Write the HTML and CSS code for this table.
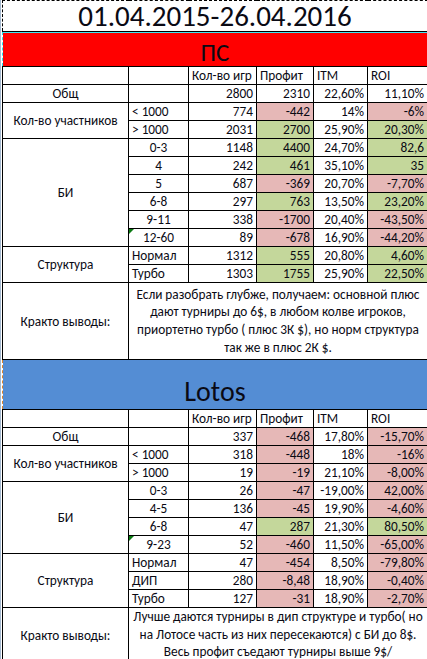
FILE: index.html
```html
<!DOCTYPE html>
<html lang="ru">
<head>
<meta charset="utf-8">
<title>Статистика</title>
<link rel="stylesheet" href="styles.css">
</head>
<body>
<div class="sheet">
<table class="grid">
<colgroup>
<col class="c1"><col class="c2"><col class="c3"><col class="c4"><col class="c5"><col class="c6">
</colgroup>
<tbody>
<tr class="title-row"><td colspan="6" class="title">01.04.2015-26.04.2016</td></tr>
<tr class="band-row red"><td colspan="6" class="band band-ps">ПС</td></tr>
<tr class="head"><td></td><td></td><td>Кол-во игр</td><td>Профит</td><td>ITM</td><td>ROI</td></tr>
<tr><td class="lbl">Общ</td><td></td><td class="n">2800</td><td class="n">2310</td><td class="n">22,60%</td><td class="n">11,10%</td></tr>
<tr><td class="lbl" rowspan="2">Кол-во участников</td><td class="l">&lt; 1000</td><td class="n">774</td><td class="n p">-442</td><td class="n">14%</td><td class="n p">-6%</td></tr>
<tr><td class="l">&gt; 1000</td><td class="n">2031</td><td class="n g">2700</td><td class="n">25,90%</td><td class="n g">20,30%</td></tr>
<tr><td class="lbl" rowspan="6">БИ</td><td class="c">0-3</td><td class="n">1148</td><td class="n g">4400</td><td class="n">24,70%</td><td class="n g">82,6</td></tr>
<tr><td class="c">4</td><td class="n">242</td><td class="n g">461</td><td class="n">35,10%</td><td class="n g">35</td></tr>
<tr><td class="c">5</td><td class="n">687</td><td class="n p">-369</td><td class="n">20,70%</td><td class="n p">-7,70%</td></tr>
<tr><td class="c">6-8</td><td class="n">297</td><td class="n g">763</td><td class="n">13,50%</td><td class="n g">23,20%</td></tr>
<tr><td class="c">9-11</td><td class="n">338</td><td class="n p">-1700</td><td class="n">20,40%</td><td class="n p">-43,50%</td></tr>
<tr><td class="c flag">12-60</td><td class="n">89</td><td class="n p">-678</td><td class="n">16,90%</td><td class="n p">-44,20%</td></tr>
<tr><td class="lbl" rowspan="2">Структура</td><td class="l">Нормал</td><td class="n">1312</td><td class="n g">555</td><td class="n">20,80%</td><td class="n g">4,60%</td></tr>
<tr><td class="l">Турбо</td><td class="n">1303</td><td class="n g">1755</td><td class="n">25,90%</td><td class="n g">22,50%</td></tr>
<tr class="note-row note-1"><td class="lbl">Кракто выводы:</td><td colspan="5" class="note">Если разобрать глубже, получаем: основной плюс<br>дают турниры до 6$, в любом колве игроков,<br>приортетно турбо ( плюс 3К $), но норм структура<br>так же в плюс 2К $.</td></tr>
<tr class="band-row blue"><td colspan="6" class="band band-lotos">Lotos</td></tr>
<tr class="head"><td></td><td></td><td>Кол-во игр</td><td>Профит</td><td>ITM</td><td>ROI</td></tr>
<tr><td class="lbl">Общ</td><td></td><td class="n">337</td><td class="n p">-468</td><td class="n">17,80%</td><td class="n p">-15,70%</td></tr>
<tr><td class="lbl" rowspan="2">Кол-во участников</td><td class="l">&lt; 1000</td><td class="n">318</td><td class="n p">-448</td><td class="n">18%</td><td class="n p">-16%</td></tr>
<tr><td class="l">&gt; 1000</td><td class="n">19</td><td class="n p">-19</td><td class="n">21,10%</td><td class="n p">-8,00%</td></tr>
<tr><td class="lbl" rowspan="4">БИ</td><td class="c">0-3</td><td class="n">26</td><td class="n p">-47</td><td class="n">-19,00%</td><td class="n p">42,00%</td></tr>
<tr><td class="c">4-5</td><td class="n">136</td><td class="n p">-45</td><td class="n">19,90%</td><td class="n p">-4,60%</td></tr>
<tr><td class="c">6-8</td><td class="n">47</td><td class="n g">287</td><td class="n">21,30%</td><td class="n g">80,50%</td></tr>
<tr><td class="c flag">9-23</td><td class="n">52</td><td class="n p">-460</td><td class="n">11,50%</td><td class="n p">-65,00%</td></tr>
<tr><td class="lbl" rowspan="3">Структура</td><td class="l">Нормал</td><td class="n">47</td><td class="n p">-454</td><td class="n">8,50%</td><td class="n p">-79,80%</td></tr>
<tr><td class="l">ДИП</td><td class="n">280</td><td class="n p">-8,48</td><td class="n">18,90%</td><td class="n p">-0,40%</td></tr>
<tr><td class="l">Турбо</td><td class="n">127</td><td class="n p">-31</td><td class="n">18,90%</td><td class="n p">-2,70%</td></tr>
<tr class="note-row note-2"><td class="lbl">Кракто выводы:</td><td colspan="5" class="note">Лучше даются турниры в дип структуре и турбо( но<br>на Лотосе часть из них пересекаются) с БИ до 8$.<br>Весь профит съедают турниры выше 9$/</td></tr>
</tbody>
</table>
</div>
</body>
</html>
```

FILE: styles.css
```css
html, body {
  margin: 0;
  padding: 0;
  background: #ffffff;
}

body {
  font-family: "Carlito", "Liberation Sans", Arial, sans-serif;
  font-size: 13.3px;
  color: #0a0a14;
  overflow: hidden;
}

.sheet {
  border-left: 1px solid #a3b8cf;
  padding-left: 1px;
  width: 425px;
}

.grid {
  border-collapse: collapse;
  table-layout: fixed;
  width: 425px;
  border-left: 1px dashed #000;
}

.c1 { width: 126px; }
.c2 { width: 60px; }
.c3 { width: 68px; }
.c4 { width: 57px; }
.c5 { width: 54px; }
.c6 { width: 60px; }

.grid td {
  border: 1px solid #000;
  height: 17px;
  padding: 0 3px;
  line-height: 17px;
  white-space: nowrap;
  overflow: hidden;
  vertical-align: middle;
}

.grid tr { height: 18px; }

.grid td.n { text-align: right; padding-right: 3px; }
.grid td.l { text-align: left; }
.grid td.c { text-align: center; }
.grid td.lbl { text-align: center; }
.grid td.p { background: #e6b8b7; }
.grid td.g { background: #c4d79b; }

.grid td.flag { position: relative; }
.grid td.flag::before {
  content: "";
  position: absolute;
  left: 0;
  top: 0;
  border-top: 5px solid #0b7a12;
  border-right: 5px solid transparent;
}

.title-row { height: 31px; }
.grid td.title {
  height: 28px;
  border-top: 1px dashed #000;
  border-right: 1px dashed #000;
  border-left: 1px dashed #000;
  text-align: center;
  font-size: 29px;
  line-height: 29px;
  vertical-align: top;
  padding: 1px 0 0;
  overflow: visible;
}

.band-row.red { height: 34px; }
.band-row.blue { height: 48px; }

.grid td.band {
  text-align: center;
  vertical-align: bottom;
  padding: 0;
}

.grid td.band-ps {
  background: #ff0000;
  height: 33px;
  font-size: 25px;
  line-height: 24px;
  padding-bottom: 1px;
  border-left: 1px dashed #22e0ee;
  box-shadow: inset 0 1px 0 #3fe6f2;
}

.grid td.band-lotos {
  background: #548dd4;
  height: 47px;
  font-size: 28px;
  line-height: 30px;
  padding-bottom: 2px;
  border-left: 1px dashed #d9822b;
}

.note-row.note-1 { height: 77px; }
.note-row.note-2 { height: 56px; }

.grid td.note {
  text-align: center;
  white-space: nowrap;
  line-height: 17.6px;
  vertical-align: middle;
  padding: 0;
}

.note-2 td.note {
  vertical-align: top;
  padding-top: 0;
}
```
